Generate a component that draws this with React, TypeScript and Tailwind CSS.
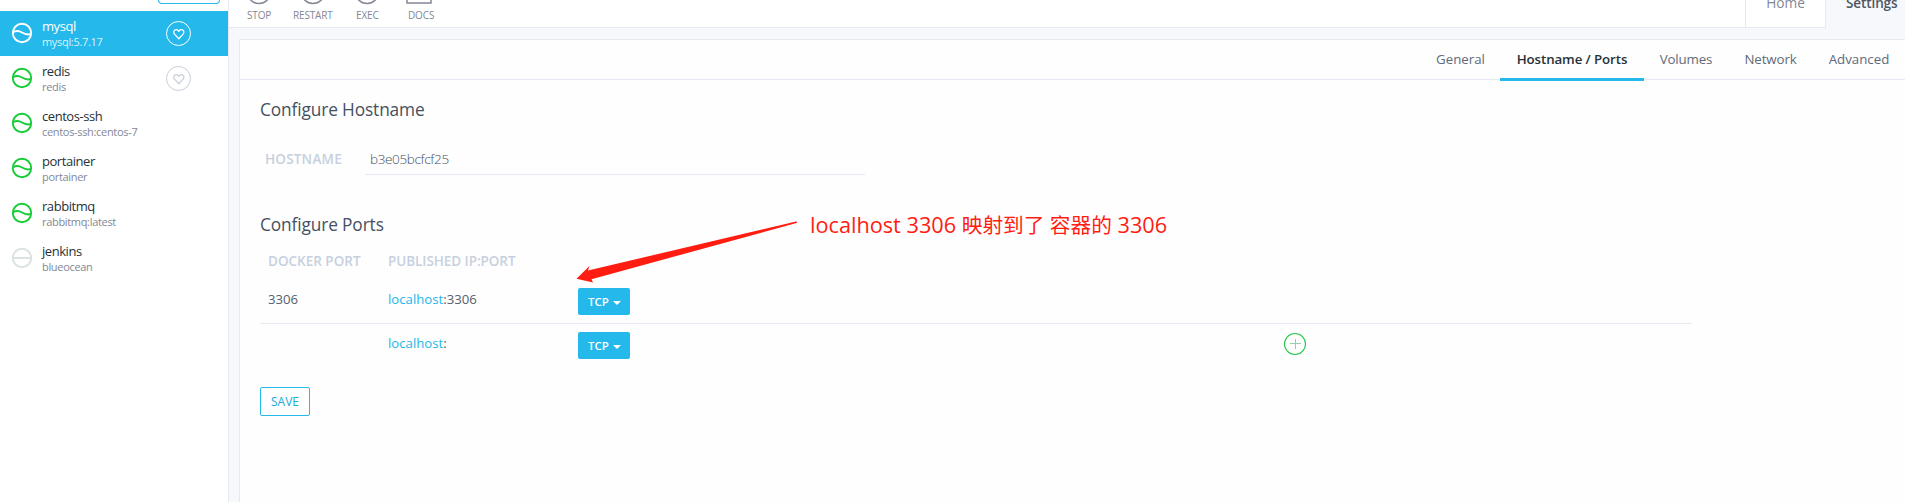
import React from "react";

type Status = "active" | "running" | "stopped";

interface Container {
  name: string;
  image: string;
  status: Status;
  favorite?: boolean;
}

const containers: Container[] = [
  { name: "mysql", image: "mysql:5.7.17", status: "active", favorite: true },
  { name: "redis", image: "redis", status: "running", favorite: true },
  { name: "centos-ssh", image: "centos-ssh:centos-7", status: "running" },
  { name: "portainer", image: "portainer", status: "running" },
  { name: "rabbitmq", image: "rabbitmq:latest", status: "running" },
  { name: "jenkins", image: "blueocean", status: "stopped" },
];

function StatusIcon({ status }: { status: Status }) {
  const color = status === "active" ? "text-white" : status === "running" ? "text-[#17cc38]" : "text-[#dbe2e2]";
  return (
    <svg className={"mb-px h-[22px] w-[22px] shrink-0 " + color} viewBox="0 0 22 22" fill="none" stroke="currentColor" strokeWidth="1.9">
      <circle cx="11" cy="11" r="9.2" />
      {status === "stopped" ? <path d="M2 11H20" /> : <path d="M2 10.2C5 8.6 8 8.6 11 10.5S17 12.900 20 12" />}
    </svg>
  );
}

function Heart({ active }: { active: boolean }) {
  return (
    <svg className={"h-[25px] w-[25px] shrink-0 " + (active ? "text-white" : "text-[#c9cedb]")} viewBox="0 0 25 25" fill="none" stroke="currentColor">
      <circle cx="12.500" cy="12.500" r="12" strokeWidth="1" />
      <path d="M12.800 17.700L8.500 13.100C7.400 11.800 7.500 10.100 8.600 9.200C9.900 8.200 11.800 8.500 12.800 10.400C13.800 8.500 15.700 8.200 17 9.200C18.100 10.100 18.200 11.800 17.100 13.100Z" strokeWidth="1.300" strokeLinejoin="round" />
    </svg>
  );
}

function Sidebar() {
  return (
    <aside className="flex w-[229px] shrink-0 flex-col border-r border-[#e5e9f2] bg-white">
      <div className="flex h-[11px] items-start pl-[158px]">
        <div className="h-1 w-[62px] rounded-b-sm border border-t-0 border-[#24b8eb]" />
      </div>
      {containers.map((c) => {
        const active = c.status === "active";
        return (
          <div key={c.name} className={"flex h-[45px] items-center pl-[11px] " + (active ? "bg-[#24b8eb]" : "bg-white")}>
            <StatusIcon status={c.status} />
            <div className="mb-px ml-[9px] flex w-[124px] flex-col whitespace-nowrap">
              <span className={"h-[16px] text-[13px] leading-[16px] tracking-[-0.45px] " + (active ? "text-white" : "text-[#253237]")}>{c.name}</span>
              <span className={"h-[15px] text-[11px] leading-[15px] tracking-[-0.32px] " + (active ? "text-[#d9f3fc]" : "text-[#838896]")}>{c.image}</span>
            </div>
            {c.favorite && <Heart active={active} />}
          </div>
        );
      })}
    </aside>
  );
}

function HeaderBar() {
  return (
    <header className="flex h-7 shrink-0 items-stretch bg-[#f7f8fc]">
      <div className="flex flex-1 border-b border-[#e5e9f2] bg-white text-[#838896]">
        <div className="w-[400px]">
          <svg className="block h-[6px] w-[400px]" viewBox="0 0 400 6" fill="none" stroke="currentColor" strokeWidth="1.500">
            <circle cx="30" cy="-8" r="11.500" />
            <circle cx="84" cy="-8" r="11.500" />
            <circle cx="138" cy="-8" r="11.500" />
            <path d="M178 -2V3H202V-2" />
          </svg>
          <div className="flex h-[19px] text-[10px] leading-[19px] font-medium tracking-[-0.15px]">
            <span className="ml-[18px] w-[46px]">STOP</span>
            <span className="w-[63px]">RESTART</span>
            <span className="w-[52px]">EXEC</span>
            <span>DOCS</span>
          </div>
        </div>
      </div>
      <div className="flex w-[81px] items-start justify-center overflow-hidden border-x border-b border-[#e5e9f2] bg-white">
        <span className="mt-[-7px] text-[13.700px] leading-[20px] font-medium text-[#838896]">Home</span>
      </div>
      <div className="flex w-[79px] items-start overflow-hidden pl-[20px]">
        <span className="mt-[-7px] text-[13.500px] leading-[20px] font-semibold tracking-[-0.1px] text-[#4b5566]">Settings</span>
      </div>
    </header>
  );
}

function Tabs() {
  return (
    <nav className="flex h-10 shrink-0 justify-end text-[13.300px] leading-[38px] text-[#626a7a]">
      <div className="flex flex-1 border-b border-[#e5e9f2]" />
      <div className="w-[79px] border-b border-[#e5e9f2] text-center">General</div>
      <div className="mb-[-1px] w-[144px] border-b-[3px] border-[#24b8eb] text-center font-semibold tracking-[-0.1px] text-[#253237]">Hostname / Ports</div>
      <div className="w-[84px] border-b border-[#e5e9f2] text-center tracking-[-0.15px]">Volumes</div>
      <div className="w-[85px] border-b border-[#e5e9f2] text-center tracking-[-0.1px]">Network</div>
      <div className="w-[92px] border-b border-[#e5e9f2] text-center">Advanced</div>
    </nav>
  );
}

function ProtocolButton() {
  return (
    <button className="flex h-[27px] w-[52px] items-center rounded-xs bg-[#24b8eb] pl-[10px] text-[11.500px] font-semibold text-white">
      TCP
      <svg className="mt-[3px] ml-[4px] h-1 w-2" viewBox="0 0 8 4" fill="currentColor">
        <path d="M0 0H8L4 4Z" />
      </svg>
    </button>
  );
}

function HostnameSection() {
  return (
    <section className="flex h-[95px] flex-col">
      <h3 className="h-[47px] text-[17.300px] leading-[23px] tracking-[-0.12px] text-[#445061]">Configure Hostname</h3>
      <div className="flex h-[30px] pl-[5px] leading-[24px]">
        <span className="w-[100px] pt-[2px] text-[13.500px] font-semibold tracking-[0.2px] text-[#c7d0de]">HOSTNAME</span>
        <span className="w-[500px] border-b border-[#e5e9f2] pt-[2px] pl-[5px] text-[13.500px] font-light tracking-[-0.35px] text-[#445061]">b3e05bcfcf25</span>
      </div>
    </section>
  );
}

function PortsSection() {
  return (
    <section className="flex flex-col text-[13.200px] text-[#556070]">
      <h3 className="h-[36px] text-[17.300px] leading-[23px] tracking-[-0.12px] text-[#445061]">Configure Ports</h3>
      <div className="flex h-[30px] pl-2 text-[13.500px] leading-[24px] font-semibold text-[#c7d0de]">
        <span className="w-[120px]">DOCKER PORT</span>
        <span className="tracking-[-0.06px]">PUBLISHED IP:PORT</span>
      </div>
      <div className="flex h-[45px] w-[1432px] border-b border-[#e5e9f2] pl-2 leading-[22px]">
        <span className="w-[120px] pt-[9px]">3306</span>
        <span className="w-[190px] pt-[9px]"><span className="text-[#24b8eb]">localhost</span>:3306</span>
        <div className="pt-[9px]"><ProtocolButton /></div>
      </div>
      <div className="flex h-[63px] w-[1432px] pl-[128px] leading-[22px]">
        <span className="w-[190px] pt-[8px]"><span className="text-[#24b8eb]">localhost</span>:</span>
        <div className="w-[705px] pt-2"><ProtocolButton /></div>
        <svg className="mt-[8px] h-6 w-6" viewBox="0 0 24 24" fill="none" stroke="#25c648">
          <circle cx="12" cy="12" r="10.500" strokeWidth="1.100" />
          <path d="M7 11.500H18M12.500 7V17" stroke="#94cdb3" strokeWidth="1" />
        </svg>
      </div>
      <button className="h-[29px] w-[50px] rounded-xs border border-[#24b8eb] text-[12px] leading-[27px] font-medium text-[#24a9d8]">SAVE</button>
    </section>
  );
}

function Annotation() {
  return (
    <div className="pointer-events-none absolute top-[205px] left-[570px] flex w-[640px] text-[#ff1d12]">
      <svg className="h-[85px] w-[240px] shrink-0" viewBox="570 205 240 85" fill="currentColor">
        <path d="M576.500 278.700L589.500 266L588 270.500L796 221.500Q798 221.800 796.500 223L591.500 279.300L593 282.500Z" />
      </svg>
      <span className="pt-[4px] text-[21.700px] leading-[32px] whitespace-nowrap">
        localhost 3306 <span className="text-[20.700px]">映射到了 容器的</span> 3306
      </span>
    </div>
  );
}

export default function App() {
  return (
    <div className="relative flex h-[502px] w-[1905px] overflow-hidden bg-[#f7f8fc] font-['Open_Sans','Noto_Sans_CJK_SC',sans-serif]">
      <Sidebar />
      <main className="flex min-w-0 flex-1 flex-col">
        <HeaderBar />
        <div className="mt-[11px] ml-[10px] flex flex-1 flex-col border-t border-l border-[#e5e9f2] bg-[#fefefe]">
          <Tabs />
          <div className="flex flex-col gap-5 pt-[18px] pl-5">
            <HostnameSection />
            <PortsSection />
          </div>
        </div>
      </main>
      <Annotation />
    </div>
  );
}
